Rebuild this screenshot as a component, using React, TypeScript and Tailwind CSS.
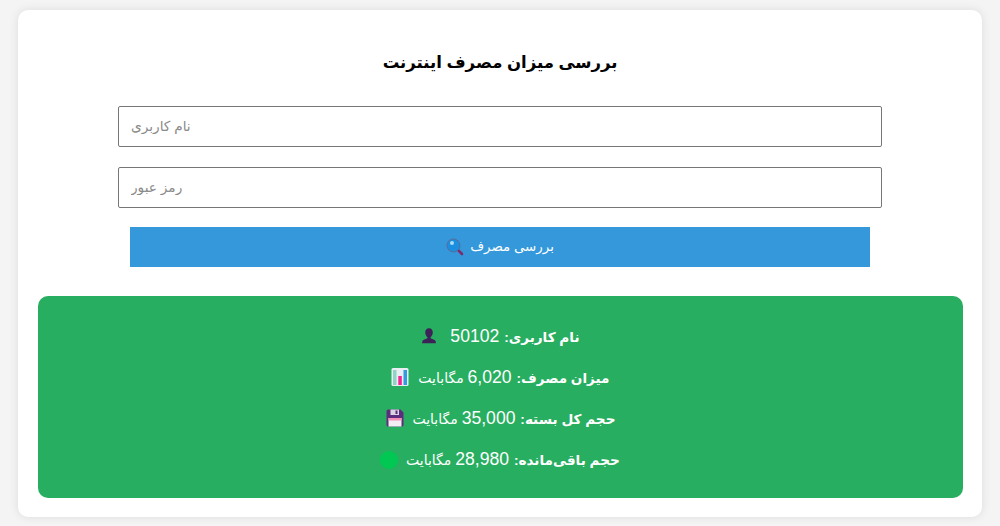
const FONT = "font-['Liberation_Sans','DejaVu_Sans',sans-serif]";

function UserIcon() {
  return (
    <svg width="18" height="18" viewBox="0 0 20 20" className="mr-[7px] inline-block align-[-3px]">
      <path d="M10 1.500c2.800 0 4.200 2.200 4.200 4.600 0 2.300-1.300 4.400-2.500 5.200v1.200l4 1.700c1 .5 1.600 1.300 1.800 2.300l.2 1.500H2.300l.2-1.500c.2-1 .8-1.800 1.800-2.300l4-1.700v-1.200C7.100 10.500 5.800 8.400 5.800 6.100 5.800 3.700 7.200 1.500 10 1.500z" fill="#3e2158" />
    </svg>
  );
}

function ChartIcon() {
  return (
    <svg width="20" height="20" viewBox="0 0 20 20" className="mr-[3px] inline-block align-[-4px]">
      <rect x="1.500" y="1" width="17" height="18" rx="1.500" fill="#e8eef2" />
      <rect x="3" y="3" width="3.500" height="15" fill="#8fd3c8" />
      <rect x="8.300" y="9" width="3.500" height="9" fill="#f0258f" />
      <rect x="13.500" y="3" width="3.500" height="15" fill="#2f9be0" />
    </svg>
  );
}

function SaveIcon() {
  return (
    <svg width="20" height="20" viewBox="0 0 20 20" className="mr-[3px] inline-block align-[-4px]">
      <path d="M3 1.500h12.500l3 3V17a1.500 1.500 0 0 1-1.500 1.500H3A1.500 1.500 0 0 1 1.500 17V3A1.500 1.500 0 0 1 3 1.500z" fill="#5c2d7e" />
      <rect x="5.500" y="1.500" width="8.500" height="5.500" fill="#d9d4e0" />
      <rect x="10.500" y="2.500" width="2" height="3.500" fill="#5c2d7e" />
      <rect x="3.500" y="10" width="13" height="8.500" fill="#f4eef4" />
      <rect x="3.500" y="10" width="13" height="2.500" fill="#f48fb8" />
    </svg>
  );
}

function SearchIcon() {
  return (
    <svg width="18" height="18" viewBox="0 0 18 18" className="shrink-0">
      <path d="M11 11l5 5" stroke="#7b2d6e" strokeWidth="2.600" strokeLinecap="round" />
      <circle cx="7.500" cy="7.500" r="6.500" fill="#1a8fe0" stroke="#5a6b9a" strokeWidth="1" />
      <circle cx="6" cy="5" r="2" fill="#a8dcf5" />
    </svg>
  );
}

function Row({ label, value, unit, icon }: { label: string; value: string; unit?: string; icon: React.ReactNode }) {
  return (
    <p className="h-[21px] text-center text-[17.600px] leading-[21px] text-white">
      <strong className="text-[13.600px]">{label}:</strong> {value}{unit ? <span className="text-[14px]"> {unit}</span> : null} {icon}
    </p>
  );
}

export default function App() {
  return (
    <div dir="rtl" className={`${FONT} h-[526px] overflow-hidden bg-[#f4f4f4] px-[18px] pt-[10px]`}>
      <div className="flex h-[507px] flex-col items-center rounded-[10px] bg-white px-5 pt-10 shadow-[0_0_10px_rgba(0,0,0,0.1)]">
        <h2 className="text-[16.500px] leading-6 font-bold text-black">بررسی میزان مصرف اینترنت</h2>

        <input
          dir="ltr"
          type="text"
          placeholder="نام کاربری"
          className="mt-8 h-[41px] w-[764px] rounded-[2px] border border-[#767676] px-3 text-[13.700px] outline-none placeholder:text-[#8a8a8a]"
        />
        <input
          dir="ltr"
          type="password"
          placeholder="رمز عبور"
          className="mt-5 h-[41px] w-[764px] rounded-[2px] border border-[#767676] px-3 text-[13.700px] outline-none placeholder:text-[#8a8a8a]"
        />
        <button className="mt-[19px] flex h-10 w-[740px] items-center justify-center gap-[6px] bg-[#3498db] text-[13.400px] text-white">
          <span>بررسی مصرف</span>
          <SearchIcon />
        </button>

        <div className="mt-[29px] flex h-[202px] w-[925px] flex-col gap-5 rounded-[10px] bg-[#27ae60] pt-[30px]">
          <Row label="نام کاربری" value="50102" icon={<UserIcon />} />
          <Row label="میزان مصرف" value="6,020" unit="مگابایت" icon={<ChartIcon />} />
          <Row label="حجم کل بسته" value="35,000" unit="مگابایت" icon={<SaveIcon />} />
          <Row
            label="حجم باقی‌مانده"
            value="28,980"
            unit="مگابایت"
            icon={<span className="mr-[3px] inline-block h-[18px] w-[18px] rounded-full bg-[#00c853] align-[-4px]" />}
          />
        </div>
      </div>
    </div>
  );
}
